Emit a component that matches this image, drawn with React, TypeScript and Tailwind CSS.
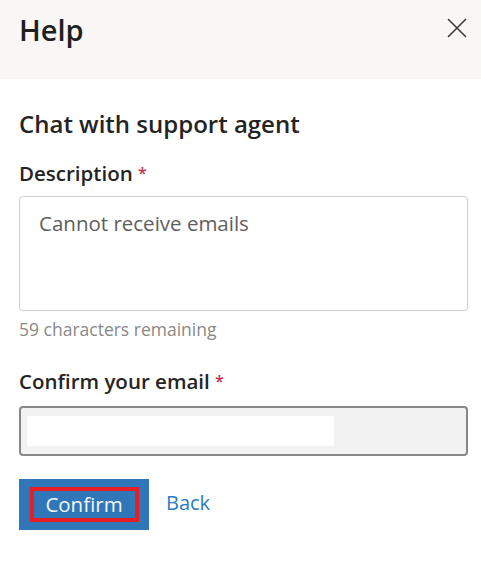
import React from "react";

export default function App() {
  return (
    <div
      className="w-[481px] h-[568px] bg-white text-[#252423]"
      style={{ fontFamily: '"Open Sans", "Noto Sans", sans-serif' }}
    >
      <div className="h-[79px] bg-[#f8f7f6] flex items-start justify-between pl-[19px] pr-[13px]">
        <h1 className="mt-[12px] text-[29px] leading-[36px] font-semibold text-[#201f1e]">Help</h1>
        <button className="mt-[17px] w-[22px] h-[22px] flex items-center justify-center text-[#3b3a39]">
          <svg width="20" height="20" viewBox="0 0 20 20" fill="none" stroke="currentColor" strokeWidth="1.6" strokeLinecap="round">
            <path d="M1.5 1.5 L18.5 18.5 M18.5 1.5 L1.5 18.5" />
          </svg>
        </button>
      </div>

      <div className="pl-[19px] pr-[13px] pt-[29px]">
        <h2 className="text-[24px] leading-[32px] font-semibold text-[#252423]">Chat with support agent</h2>

        <label className="block mt-[19px] text-[20.5px] leading-[28px] font-semibold text-[#252423]">
          Description <span className="text-[16px] align-top text-[#c4314b]">*</span>
        </label>

        <div className="mt-[9px] h-[115px] border border-[#d2d0ce] rounded-[4px] px-[19px] pt-[12px] shadow-[0_0_1px_rgba(0,0,0,0.15)]">
          <span className="text-[20.5px] leading-[28px] text-[#605e5c]">Cannot receive emails</span>
        </div>

        <div className="mt-[6px] text-[17.5px] leading-[24px] text-[#8a8886]">59 characters remaining</div>

        <label className="block mt-[26px] text-[20.5px] leading-[28px] font-semibold text-[#252423]">
          Confirm your email <span className="text-[16px] align-top text-[#c4314b]">*</span>
        </label>

        <div className="mt-[11px] h-[50px] border-2 border-[#8a8886] rounded-[4px] bg-[#f2f2f2] pl-[6px] pt-[8px]">
          <div className="w-[307px] h-[30px] bg-white" />
        </div>

        <div className="mt-[23px] flex items-center gap-[17px]">
          <button className="w-[130px] h-[51px] bg-[#2f77b8] flex items-center justify-center">
            <span className="w-[109px] h-[35px] border-[4px] border-[#e81e25] flex items-center justify-center text-[20.5px] leading-none text-[#f3f6fa]">
              Confirm
            </span>
          </button>
          <span className="-mt-[4px] text-[20px] leading-[26px] text-[#2b7bc4]">Back</span>
        </div>
      </div>
    </div>
  );
}
